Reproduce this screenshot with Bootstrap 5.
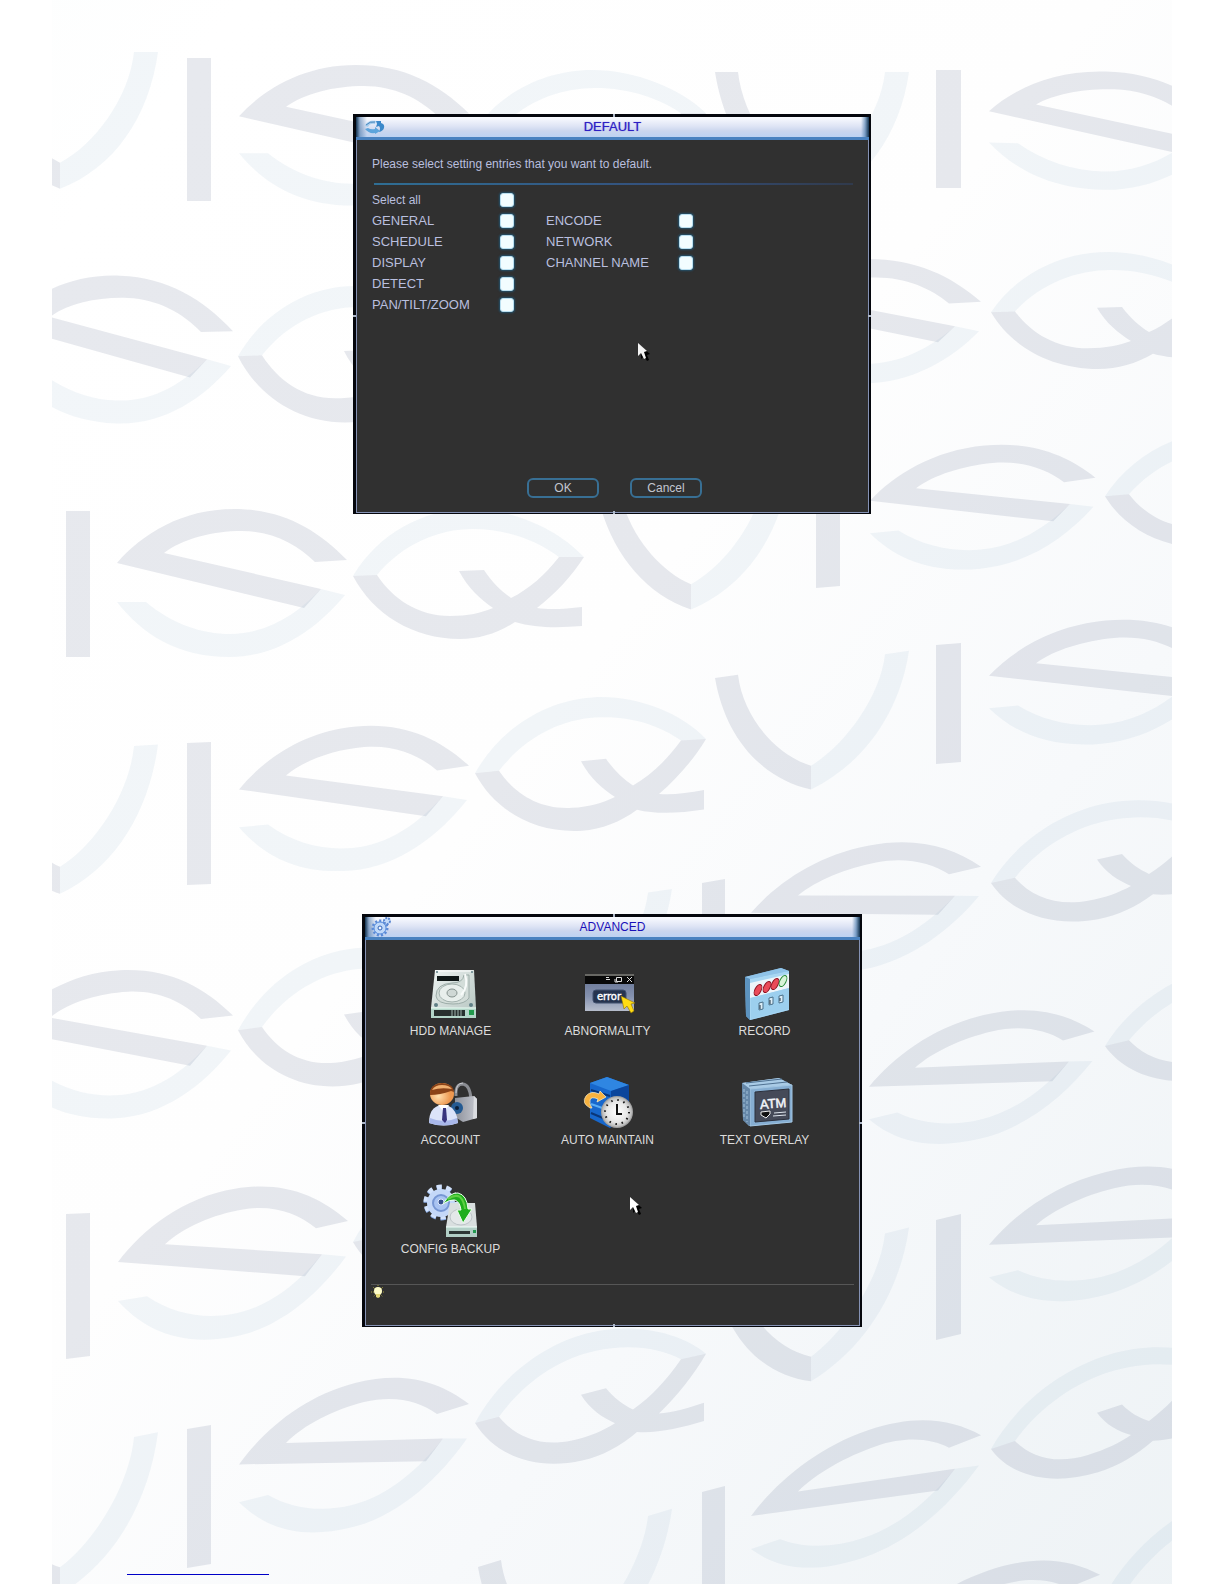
<!DOCTYPE html>
<html lang="en">
<head>
<meta charset="utf-8">
<meta name="viewport" content="width=device-width, initial-scale=1">
<title>Default and advanced settings</title>
<link href="https://cdn.jsdelivr.net/npm/bootstrap@5.3.0/dist/css/bootstrap.min.css" rel="stylesheet">
<style>
body{font-family:"Liberation Sans",Arial,sans-serif;background:#fff}
.sheet{min-height:1584px;padding-top:114px;overflow:hidden}
.backdrop{position:absolute;top:0;left:0;width:100%;height:1584px;z-index:0}
.dvr{position:relative;z-index:1;background:#303030;border:solid #05070d;border-width:3px 2px 1px 3px}
.dvr-default{max-width:518px}
.dvr-advanced{max-width:500px;margin-top:400px}
.dvr-title{height:23px;border-bottom:3px solid #4a82c0;
  background:linear-gradient(90deg,#12324f 0,rgba(70,115,165,.55) 4px,rgba(255,255,255,0) 11px,rgba(255,255,255,0) calc(100% - 8px),rgba(70,120,170,.6) calc(100% - 4px),#12324f 100%),linear-gradient(#fafbff 0,#dfe5f5 45%,#cbd6ee 70%,#bdd2f2 100%)}
.dvr-title h1{font-size:13px;line-height:20px;color:#2d20c4;font-weight:400}
.dvr-default .dvr-title h1{text-shadow:0 0 1px #6a60d8}
.dvr-advanced .dvr-title h1{font-size:12px;color:#1a10b8}
.title-icon{position:absolute;left:6px;top:0}
.dvr-body{border:1px solid #8592b4;border-top:0}
.dvr-default .dvr-body{padding:15px 15px 14px;font-size:12px;line-height:18px;color:#b9bfdf}
.rule-blue{height:2px;background:linear-gradient(90deg,#2f6e94,#34507c 60%,#303a4c);margin:10px 0 4px 2px}
.opt{height:21px;font-size:13px}
.opt-all{font-size:12px}
.opt-a label{width:128px}
.opt-b label{width:133px}
.opt-a{width:174px}
.opt-b{padding-top:21px}
.opt .form-check-input{width:14px;height:14px;margin:0;border:1px solid #b9dff0;border-radius:3px;background-color:#f2fdff;box-shadow:0 0 2px 1px #23506a}
.actions{margin-top:163px;padding-left:4px;gap:31px}
.btn-dvr{width:72px;height:20px;padding:0;font-size:12px;line-height:16px;color:#c3c6d0;border:2px solid #386f94;border-radius:6px}
.tiles{display:grid;grid-template-columns:repeat(3,1fr);row-gap:36px;padding:27px 16px 0 6px}
.tile{color:#dcdcdc;font-size:12px;line-height:18px;text-decoration:none}
.tile svg{display:block;margin:0 auto 3px;overflow:visible}
.hintbar{margin:26px 5px 0 5px;border-top:1px solid #565656;height:41px}
.pointer{position:absolute}
.dvr-default .pointer{left:281px;top:225px}
.dvr-advanced .pointer{left:264px;top:279px}
.tick{position:absolute;background:#aeb8c8}
.tick-t,.tick-b{width:2px;height:3px;left:50%}
.tick-t{top:-3px}.tick-b{bottom:-1px}
.tick-l,.tick-r{width:3px;height:2px;top:50%}
.tick-l{left:-3px}.tick-r{right:-2px}
.foot-rule{position:relative;z-index:1;width:142px;margin:247px 0 0 127px;border-top:1px solid #0000c8;opacity:1}
</style>
</head>
<body>
<main class="sheet position-relative">
<svg class="backdrop" viewBox="0 0 1224 1584" preserveAspectRatio="none" aria-hidden="true">
<defs>
<linearGradient id="paper" x1="0" y1="0" x2="1" y2="1"><stop offset="0" stop-color="#fdfefe"/><stop offset=".1" stop-color="#fff"/><stop offset=".45" stop-color="#fefefe"/><stop offset=".68" stop-color="#f7f9fb"/><stop offset="1" stop-color="#edf2f5"/></linearGradient>
<clipPath id="edge"><rect x="52" y="0" width="1120" height="1584"/></clipPath>
<g id="s"><path class="dk" d="M0 54C25 25 65 0 117 0C165 0 200 20 230 51L198 53C180 35 155 22 125 22C95 22 65 30 47 44L204 80L187 99Z"/><path class="lt" d="M0 93L29 93C55 115 85 125 113 125C150 125 180 105 204 80L228 86C200 120 160 148 113 148C60 148 25 125 0 93Z"/></g>
<g id="q"><path class="lt" d="M0 67C25 25 70 0 117 0C160 0 205 20 231 48L206 48C185 32 155 20 120 20C85 20 50 35 24 66Z"/><path class="dk" d="M0 67L24 66C40 90 65 107 97 107C115 107 128 104 140 99C127 90 115 79 106 62L131 61C139 73 148 82 158 89C176 80 192 66 206 48L231 48C219 67 202 85 184 99C197 101 212 100 229 98L229 117C205 119 182 119 162 113C145 124 127 130 107 130C60 130 20 105 0 67Z"/></g>
<g id="v"><path class="dk" d="M0 0L23 0C28 50 60 100 96 119L96 147C45 125 10 70 0 0Z"/><path class="lt" d="M96 119C130 100 165 50 170 0L194 0C185 70 150 125 96 147Z"/></g>
</defs>
<style>.dk{fill:#5a6a88;fill-opacity:.145}.lt{fill:#86aec8;fill-opacity:.11}</style>
<g clip-path="url(#edge)">
<rect width="1224" height="1584" fill="url(#paper)"/>
<use href="#s" transform="matrix(1 0 0 .95 239 65)"/>
<use href="#s" transform="matrix(1 .04 0 1 3 271)"/>
<use href="#s" transform="translate(117 509)"/>
<use href="#s" transform="matrix(1 -.09 0 .97 239 737)"/>
<use href="#s" transform="matrix(1 -.05 0 1 3 976)"/>
<use href="#s" transform="matrix(1 -.165 0 1 118 1208)"/>
<use href="#s" transform="matrix(1 -.25 0 .97 239 1412)"/>
<use href="#s" transform="matrix(1 .03 0 .8 989 68)"/>
<use href="#s" transform="matrix(1 0 0 .84 751 259)"/>
<use href="#s" transform="matrix(.98 -.09 0 .83 870 456)"/>
<use href="#s" transform="matrix(1 -.09 0 .83 989 631)"/>
<use href="#s" transform="matrix(1 -.19 0 .83 751 868)"/>
<use href="#s" transform="matrix(.98 -.23 0 .83 869 1042)"/>
<use href="#s" transform="matrix(1 -.24 0 .83 989 1200)"/>
<use href="#s" transform="matrix(1 -.34 0 .85 751 1470)"/>
<use href="#s" transform="matrix(1 -.35 0 .85 870 1612)"/>
<use href="#q" transform="matrix(1 0 0 .9 475 70)"/>
<use href="#q" transform="matrix(1 0 0 1.05 238 286)"/>
<use href="#q" transform="translate(353 509)"/>
<use href="#q" transform="matrix(1 -.065 0 1.02 475 705)"/>
<use href="#q" transform="matrix(1 -.1 0 1.05 238 960)"/>
<use href="#q" transform="matrix(1 -.17 0 1 353 1175)"/>
<use href="#q" transform="matrix(1 -.22 0 .97 475 1358)"/>
<use href="#q" transform="matrix(1 0 0 .9 991 252)"/>
<use href="#q" transform="matrix(1 -.05 0 .9 1105 436)"/>
<use href="#q" transform="matrix(1 -.18 0 .88 991 824)"/>
<use href="#q" transform="matrix(1 -.2 0 .85 1105 989)"/>
<use href="#q" transform="matrix(1 -.3 0 .88 991 1390)"/>
<use href="#q" transform="matrix(1 -.35 0 .88 1105 1536)"/>
<use href="#v" transform="matrix(1 0 0 .93 -36 52)"/>
<use href="#v" transform="matrix(1 -.07 0 .97 -36 758)"/>
<use href="#v" transform="matrix(1 -.2 0 .97 -36 1471)"/>
<use href="#v" transform="matrix(1 0 0 .9 715 72)"/>
<use href="#v" transform="matrix(1 -.05 0 .9 595 482)"/>
<use href="#v" transform="matrix(1 -.14 0 .85 715 678)"/>
<use href="#v" transform="matrix(1 -.15 0 .85 478 918)"/>
<use href="#v" transform="matrix(1 -.25 0 .88 715 1276)"/>
<use href="#v" transform="matrix(1 -.3 0 .88 478 1567)"/>
<path class="dk" d="M187 58h24v143h-24zM187 743l24-1v142l-24 1zM187 1429l24-4v139l-24 4zM66 511h24v146h-24zM66 1214l24-1v143l-24 3zM936 70h25v118h-25zM936 645l25-2v119l-25 2zM936 1220l25-6v120l-25 6zM816 470h24v116l-24 2zM702 883l23-4v110l-23 4zM702 1492l23-6v98h-23z"/>
</g>
</svg>

<section class="dvr dvr-default w-100 mx-auto" aria-labelledby="t-default">
  <i class="tick tick-t"></i><i class="tick tick-b"></i><i class="tick tick-l"></i><i class="tick tick-r"></i>
  <header class="dvr-title position-relative text-center">
    <svg class="title-icon" width="26" height="20" viewBox="0 0 26 20"><path d="M3 9C4 5 9 3 14 4L13 7C10 6 7 7 6 10Z" fill="#a5cdee"/><path d="M3 12Q7 17 13 16V17L18 14L13 10V12Q9 13 6 11Z" fill="#5da4dc"/><path d="M14 4L19 4V6Q23 7 22 11Q21 14 17 15Q19 11 17 9L14 10L15 7Z" fill="#3b88ca"/><path d="M4 8Q8 4 13 5" stroke="#4a86bc" fill="none"/></svg>
    <h1 class="m-0" id="t-default">DEFAULT</h1>
  </header>
  <form class="dvr-body">
    <p class="m-0">Please select setting entries that you want to default.</p>
    <div class="rule-blue"></div>
    <div class="d-flex">
      <div class="opt-a">
        <div class="opt opt-all d-flex align-items-center"><label for="c-all">Select all</label><input class="form-check-input" type="checkbox" id="c-all"></div>
        <div class="opt d-flex align-items-center"><label for="c-gen">GENERAL</label><input class="form-check-input" type="checkbox" id="c-gen"></div>
        <div class="opt d-flex align-items-center"><label for="c-sch">SCHEDULE</label><input class="form-check-input" type="checkbox" id="c-sch"></div>
        <div class="opt d-flex align-items-center"><label for="c-dis">DISPLAY</label><input class="form-check-input" type="checkbox" id="c-dis"></div>
        <div class="opt d-flex align-items-center"><label for="c-det">DETECT</label><input class="form-check-input" type="checkbox" id="c-det"></div>
        <div class="opt d-flex align-items-center"><label for="c-ptz">PAN/TILT/ZOOM</label><input class="form-check-input" type="checkbox" id="c-ptz"></div>
      </div>
      <div class="opt-b">
        <div class="opt d-flex align-items-center"><label for="c-enc">ENCODE</label><input class="form-check-input" type="checkbox" id="c-enc"></div>
        <div class="opt d-flex align-items-center"><label for="c-net">NETWORK</label><input class="form-check-input" type="checkbox" id="c-net"></div>
        <div class="opt d-flex align-items-center"><label for="c-cha">CHANNEL NAME</label><input class="form-check-input" type="checkbox" id="c-cha"></div>
      </div>
    </div>
    <div class="actions d-flex justify-content-center">
      <button type="button" class="btn btn-dvr">OK</button>
      <button type="button" class="btn btn-dvr">Cancel</button>
    </div>
  </form>
  <svg class="pointer" width="14" height="20" viewBox="0 0 14 20"><path d="M4 4V17L7 14L10 19L12 18L10 13L13 12Z" fill="#000"/><path d="M1 1V14L4 11L7 17L9 16L7 10L10 9Z" fill="#f4f4f4"/></svg>
</section>

<section class="dvr dvr-advanced w-100 mx-auto" aria-labelledby="t-adv">
  <i class="tick tick-t"></i><i class="tick tick-b"></i><i class="tick tick-l"></i><i class="tick tick-r"></i>
  <header class="dvr-title position-relative text-center">
    <svg class="title-icon" width="22" height="20" viewBox="0 0 22 20"><circle cx="9" cy="11" r="7" fill="#a9cbf5" stroke="#5b8ad6" stroke-width="3" stroke-dasharray="2 2"/><circle cx="9" cy="11" r="6" fill="#c0d9f9" stroke="#5f90dc"/><circle cx="9" cy="11" r="2" fill="#eef5ff" stroke="#2f63b8"/><circle cx="16" cy="4" r="3" fill="#c5dcf9" stroke="#5b88d2" stroke-width="2" stroke-dasharray="2 1"/></svg>
    <h1 class="m-0" id="t-adv">ADVANCED</h1>
  </header>
  <div class="dvr-body">
    <nav class="tiles text-center" aria-label="Advanced settings">
      <a class="tile" href="#"><svg width="60" height="52" viewBox="0 0 60 52"><defs><linearGradient id="mt" x1="0" y1="0" x2="1" y2="1"><stop offset="0" stop-color="#eef4f2"/><stop offset="1" stop-color="#b4c3bf"/></linearGradient></defs><path d="M14 3H53L55 41V50Q55 51 54 51H11Q10 51 10 50V41Z" fill="url(#mt)"/><path d="M14 4H52" stroke="#fff"/><path d="M15 29Q15 17 31 16Q42 16 43 8H48V31Q44 37 32 37Q16 37 15 29Z" fill="#d3ddd9" stroke="#9dada9"/><ellipse cx="31" cy="26" rx="13" ry="9" fill="#e8efec" stroke="#a3b2ae"/><ellipse cx="31" cy="26" rx="5" ry="4" fill="#cfd8d5" stroke="#84918d"/><path d="M44 7Q48 20 40 28" stroke="#f8fbfa" stroke-width="2" fill="none"/><rect x="16" y="9" width="22" height="5" fill="#101818"/><path d="M10 41H55V51H10Z" fill="#b4d6c9"/><path d="M10 41H55" stroke="#eafff6"/><rect x="13" y="43" width="31" height="6" fill="#28302e"/><path d="M31 43v6M34 43v6M37 43v6M40 43v6" stroke="#9fb3ac"/><rect x="48" y="43" width="5" height="5" fill="#219a4c"/><g fill="#5f7f86"><circle cx="16" cy="5" r="1"/><circle cx="51" cy="5" r="1"/><circle cx="15" cy="38" r="2"/><circle cx="50" cy="38" r="2"/></g></svg>HDD MANAGE</a>
      <a class="tile" href="#"><svg width="60" height="52" viewBox="0 0 60 52"><defs><linearGradient id="er" x1="0" y1="0" x2="0" y2="1"><stop offset="0" stop-color="#62708f"/><stop offset=".6" stop-color="#8491ae"/><stop offset="1" stop-color="#b6bdcc"/></linearGradient></defs><rect x="7" y="7" width="49" height="37" fill="url(#er)"/><rect x="7" y="7" width="49" height="10" fill="#090909"/><path d="M7 8H56" stroke="#686864" stroke-width="2"/><g stroke="#ddd" fill="none"><path d="M28 12.500h4M28 10.500h3M38.500 10.500h5v4h-5zM37 12v3h3M49 10l5 5M54 10l-5 5"/></g><rect x="15" y="23" width="33" height="13" rx="3" fill="#26344f" stroke="#40506f"/><text x="31" y="33" text-anchor="middle" font-family="DejaVu Sans,sans-serif" font-size="10" fill="#fff" stroke="#fff" stroke-width=".4">error</text><path d="M43 29L46 42L49 39L53 46L56 44L53 37L57 36Z" fill="#ffdc13" stroke="#8f7000" stroke-width=".6"/></svg>ABNORMALITY</a>
      <a class="tile" href="#"><svg width="60" height="52" viewBox="0 0 60 52"><path d="M10 10L46 1L54 4V43L15 53L11 49Z" fill="#7fb4dd"/><path d="M10 10L46 1L54 4L15 12Z" fill="#8fc3e8"/><path d="M15 12L54 4V43L15 53Z" fill="#a8d7f3"/><path d="M15 16L54 7V21L15 31Z" fill="#eef5fa"/><path d="M10 10L15 12V53L11 49Z" fill="#5c93bf"/><path d="M16 31L54 21V42L16 52Z" fill="#9ccfee"/><g stroke-width="1"><g fill="#ea4a58" stroke="#8e1020"><ellipse cx="23" cy="23" rx="3" ry="6" transform="rotate(28 23 23)"/><ellipse cx="32" cy="20" rx="3" ry="6" transform="rotate(28 32 20)"/><ellipse cx="40" cy="17" rx="3" ry="6" transform="rotate(28 40 17)"/></g><ellipse cx="48" cy="14" rx="3" ry="6" transform="rotate(28 48 14)" fill="#d8f4d8" stroke="#278c38"/></g><g fill="#dceef8" stroke="#4a708a"><path d="M24 36l4-1v7l-4 1zM34 31l4-1v7l-4 1zM44 29l4-1v7l-4 1z"/></g><path d="M25 38v4M35 33v4M45 31v3" stroke="#1c3040"/></svg>RECORD</a>
      <a class="tile" href="#"><svg width="60" height="52" viewBox="0 0 60 52"><defs><radialGradient id="sk" cx=".35" cy=".6"><stop offset="0" stop-color="#ffe0b0"/><stop offset="1" stop-color="#ee9850"/></radialGradient><linearGradient id="lk" x1="0" y1="0" x2="1" y2="0"><stop offset="0" stop-color="#8d919b"/><stop offset=".8" stop-color="#b9bcc4"/><stop offset="1" stop-color="#d6d8dc"/></linearGradient></defs><path d="M35 20Q34 8 42 8Q49 9 50 23" fill="none" stroke="#8a8c92" stroke-width="3"/><path d="M35 17Q35 7 42 7" fill="none" stroke="#c9cacf" stroke-width="1"/><path d="M34 22L53 20L56 23V42L42 46L34 41Z" fill="url(#lk)"/><path d="M53 20L56 23V42L52 43Z" fill="#dadce0"/><circle cx="36" cy="32" r="6" fill="#245a92"/><circle cx="36" cy="32" r="2" fill="#0c1e38"/><path d="M8 47Q8 31 20 29H26Q36 33 37 47Q23 52 8 47Z" fill="#dbe3fa"/><path d="M8 47Q23 52 37 47L36 42Q23 48 9 42Z" fill="#a9b8ea"/><path d="M17 29L23 36L28 29Z" fill="#fff"/><path d="M22 32H25L26 44L24 47L21 44Z" fill="#37347e"/><ellipse cx="21" cy="18" rx="12" ry="11" fill="url(#sk)"/><path d="M9 19Q8 8 21 7Q33 8 33 16L30 15Q19 19 9 19Z" fill="#8b4318"/><path d="M11 14Q14 9 21 9Q28 9 31 13Q20 11 11 14Z" fill="#f0b070"/></svg>ACCOUNT</a>
      <a class="tile" href="#"><svg width="60" height="52" viewBox="0 0 60 52"><defs><radialGradient id="ck"><stop offset="0" stop-color="#fff"/><stop offset=".7" stop-color="#e6e6e6"/><stop offset="1" stop-color="#b5b5b5"/></radialGradient></defs><path d="M12 7L29 1L51 9V40L32 52L12 42Z" fill="#1767cc"/><path d="M12 7L29 1L51 9L33 15Z" fill="#2f86e2"/><path d="M33 15L51 9V40L32 52Z" fill="#0b459c"/><path d="M13 14L32 20M13 37L32 45" stroke="#0a3678" stroke-width="2"/><path d="M13 28L30 34" stroke="#59adf5" stroke-width="2"/><path d="M12 32Q3 27 8 20Q13 14 21 18L22 15L28 21L19 26L20 23Q13 20 12 24Q11 28 14 32Z" fill="#f7b240" stroke="#fff0c8" stroke-width=".7"/><circle cx="39" cy="36" r="16" fill="#a0a0a0"/><circle cx="39" cy="36" r="15" fill="url(#ck)"/><circle cx="39" cy="36" r="12" fill="none" stroke="#161616" stroke-width="2" stroke-dasharray="1.500 4.780"/><path d="M39 28V38H44" stroke="#111" stroke-width="2" fill="none"/></svg>AUTO MAINTAIN</a>
      <a class="tile" href="#"><svg width="60" height="52" viewBox="0 0 60 52"><path d="M7 7L44 2L57 9V46L14 50L8 44Z" fill="#7fa3c5"/><path d="M7 7L44 2L57 9L15 13Z" fill="#a9cbe6"/><path d="M15 13L57 9V46L15 50Z" fill="#86aed2" stroke="#a3c6e2"/><path d="M7 7L15 13V50L8 44Z" fill="#6587a8"/><path d="M9 13v29M12 15v31" stroke="#a4c2da" stroke-dasharray="3 2"/><path d="M11 7L47 3M14 10L52 6" stroke="#4f7191"/><path d="M20 16L54 13V43L20 46Z" fill="#454a58" stroke="#2b303c"/><text x="38" y="32" text-anchor="middle" transform="rotate(-4 38 26)" font-family="Liberation Sans,sans-serif" font-size="13" fill="#f1f4f8" stroke="#f1f4f8" stroke-width=".5">ATM</text><path d="M26 36L35 35V38L31 42L26 39Z" fill="#111" stroke="#eee"/><path d="M39 37L51 36M38 40L51 39" stroke="#dfe6ee"/></svg>TEXT OVERLAY</a>
      <a class="tile" href="#"><svg width="60" height="52" viewBox="0 0 60 52"><circle cx="20" cy="18" r="15" fill="none" stroke="#86a9e4" stroke-width="5" stroke-dasharray="5 4.425"/><circle cx="20" cy="17" r="15" fill="none" stroke="#d3e3fc" stroke-width="5" stroke-dasharray="5 4.425"/><circle cx="20" cy="18" r="14" fill="#c4d8f8"/><circle cx="20" cy="18" r="8" fill="#a9c4f2" stroke="#7797d4" stroke-width="2"/><circle cx="20" cy="17" r="3" fill="#35508c" stroke="#dce8fc"/><path d="M29 18H54L56 42V51Q56 52 55 52H26Q25 52 25 51V42Z" fill="#d9dfdf"/><ellipse cx="40" cy="32" rx="11" ry="8" fill="#e4e8e9" stroke="#bcc4c7"/><path d="M25 42H56V52H25Z" fill="#b2cfc6"/><path d="M25 42H56" stroke="#f0fffa"/><rect x="28" y="46" width="21" height="3" fill="#2d3735"/><rect x="52" y="45" width="3" height="3" fill="#229a50"/><path d="M22 19Q29 7 37 8Q46 10 47 24H51L42 38L36 25H40Q39 17 34 15Q29 14 22 19Z" fill="#1fae1d" stroke="#eaffea"/><path d="M27 14Q34 9 39 12Q43 16 44 24" stroke="#5fd044" stroke-width="2" fill="none"/></svg>CONFIG BACKUP</a>
    </nav>
    <div class="hintbar"><svg width="16" height="15" viewBox="0 0 16 15" class="d-block"><g stroke="#a09a3c" stroke-dasharray="1 1"><path d="M0 7h14M2 2l10 10M12 2L2 12M7 0v3"/></g><circle cx="7" cy="6" r="4" fill="#fdfbc8"/><path d="M5 9h4v3l-2 1l-2-1z" fill="#e4d878"/></svg></div>
  </div>
  <svg class="pointer" width="14" height="20" viewBox="0 0 14 20"><path d="M4 4V17L7 14L10 19L12 18L10 13L13 12Z" fill="#000"/><path d="M1 1V14L4 11L7 17L9 16L7 10L10 9Z" fill="#fff"/></svg>
</section>
<hr class="foot-rule mb-0">
</main>
<script src="https://cdn.jsdelivr.net/npm/bootstrap@5.3.0/dist/js/bootstrap.bundle.min.js"></script>
</body>
</html>
